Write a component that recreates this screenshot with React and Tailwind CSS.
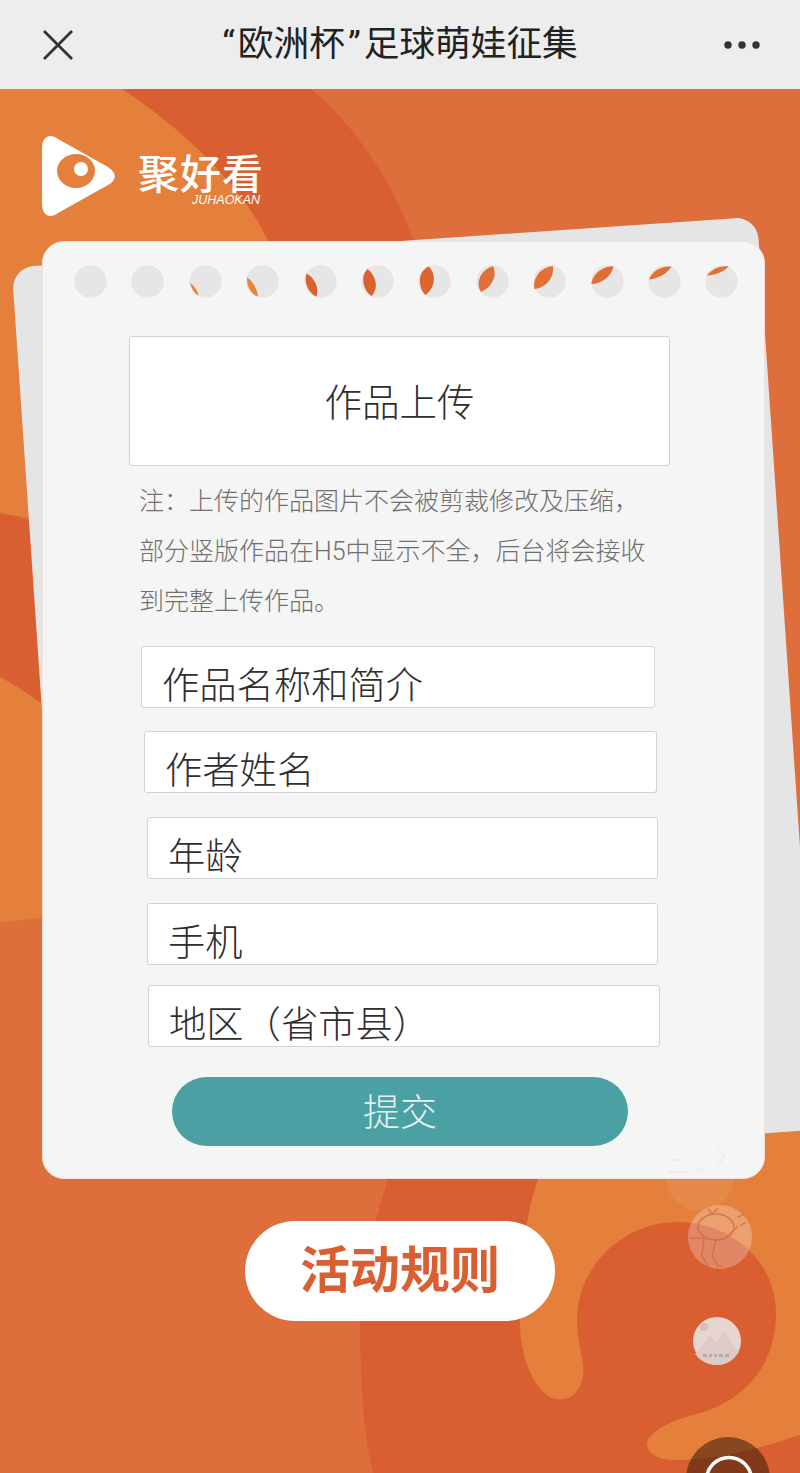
const leaves = [
  null,
  null,
  { d: "M.5 17 C4 20 8 25 9 30 C5 28 2 23 .5 17Z", c: "#e4803c" },
  { d: "M.5 12 C6 15 10.5 23 11.5 31 C5 29 0 21 .5 12Z", c: "#e8843c" },
  { d: "M2 8 C9.5 12 15 22 12 31 C5 28 -1 18 2 8Z", c: "#d9602f" },
  { d: "M6 3.5 C14 10 18 22 10 30.5 C3 26 -2.5 12 6 3.5Z", c: "#d9602f" },
  { d: "M10 1 C18 8 17 22 7 29.5 C1 24 -3 8 10 1Z", c: "#dd6330" },
  { d: "M16.5 .5 C21 10 16 21 4.5 26.5 C-1 18 3 5 16.5 .5Z", c: "#e36f38" },
  { d: "M19.5 .5 C21 12 13 22 .8 23.5 C-1 12 7 2 19.5 .5Z", c: "#e36f38" },
  { d: "M22 .8 C20 10 12 18 0 18.5 C.5 9 11 .5 22 .8Z", c: "#e06c36" },
  { d: "M23 1 C19 8 10 13 .5 14 C3 6 13 0 23 1Z", c: "#e36f38" },
  { d: "M23 1 C18 7 9 9.5 1.5 10 C6 4 14 0 23 1Z", c: "#e36f38" },
]

const fields = [
  { label: "作品名称和简介", cls: "mt-[19px] ml-[98px] w-[514px]" },
  { label: "作者姓名", cls: "mt-[23px] ml-[101px] w-[513px]" },
  { label: "年龄", cls: "mt-[24px] ml-[104px] w-[511px]" },
  { label: "手机", cls: "mt-[24px] ml-[104px] w-[511px]" },
  { label: "地区\uFF08省市县\uFF09", cls: "mt-[20px] ml-[105px] w-[512px]" },
]

const note = "注\uFF1A上传的作品图片不会被剪裁修改及压缩\uFF0C部分竖版作品在H5中显示不全\uFF0C后台将会接收到完整上传作品。"

function Hole({ leaf }) {
  return (
    <svg width="33" height="33" viewBox="-0.5 -0.5 33 33" className="shrink-0">
      <circle cx="16" cy="16" r="15.8" fill="#e6e6e6" stroke="#f0e2db" strokeWidth="1" />
      {leaf && <path d={leaf.d} fill={leaf.c} />}
    </svg>
  )
}

function Background() {
  return (
    <svg className="absolute inset-0" width="800" height="1384" viewBox="0 89 800 1384">
      <path d="M122 89 H311 C355 125 400 190 420 260 L420 320 L270 320 Z" fill="#d95f32" />
      <path d="M0 89 H122 C185 130 245 190 268 241 L290 330 L100 530 L0 513 Z" fill="#e4803c" />
      <path d="M0 513 C10 515 20 517 30 521 L100 540 L100 745 L41 703 C25 692 15 685 0 677 Z" fill="#d95f32" />
      <path d="M0 677 C15 685 25 692 41 703 L100 745 L100 915 L42 918 Q20 920 0 922 Z" fill="#e4803c" />
      <path d="M397 1150 C385 1190 360 1260 360 1322 C360 1390 365 1440 373 1473 H800 V1100 H397 Z" fill="#d95f32" />
      <path
        d="M560 1100 H800 V1435 C760 1448 720 1460 675 1460 C650 1460 642 1445 650 1437 C660 1425 680 1418 700 1413 C745 1400 776 1365 776 1313 C776 1260 730 1222 677 1222 C625 1222 577 1265 577 1320 C577 1345 585 1360 583 1375 C581 1395 565 1404 550 1397 C530 1385 520 1350 520 1322 C520 1265 524 1220 538 1179 Z"
        fill="#e4803c"
      />
    </svg>
  )
}

// stickers floating over the bottom right corner
function Stickers() {
  return (
    <svg className="absolute inset-0 pointer-events-none" width="800" height="1384" viewBox="0 89 800 1384">
      <circle cx="700" cy="1177" r="34" fill="#fff" opacity="0.07" />
      <g fill="none" stroke="#dcdcdc" strokeWidth="2" opacity="0.25">
        <path d="M716 1146 L724 1156 L718 1166 M668 1160 H684 M668 1172 H690 M694 1166 L706 1172" />
      </g>

      <circle cx="720" cy="1237" r="32" fill="#fff" opacity="0.25" />
      <g fill="none" stroke="#c9683f" strokeWidth="1.5" opacity="0.7">
        <ellipse cx="716" cy="1227" rx="18" ry="13" />
        <path d="M712 1214 L708 1208 M712 1214 L718 1208 M690 1238 H704 L702 1256 L708 1266 M716 1240 L712 1256 L718 1266 H722 M728 1236 L738 1226" />
        <path d="M738 1217 L744 1214 M740 1226 L746 1222" />
      </g>

      <circle cx="717" cy="1341" r="24" fill="#e7d5d2" />
      <circle cx="704" cy="1327" r="4" fill="#d6c0bc" />
      <path d="M695 1354 L710 1336 L717 1342 L724 1331 L739 1352 Q730 1365 717 1365 Q703 1365 695 1354Z" fill="#dccbc9" />
      <g fill="#a89a9c" opacity="0.7">
        <rect x="703" y="1354" width="4" height="3" />
        <rect x="709" y="1354" width="3" height="3" />
        <rect x="714" y="1354" width="3" height="3" />
        <rect x="719" y="1354" width="4" height="3" />
        <rect x="725" y="1354" width="4" height="3" />
      </g>

      <circle cx="728" cy="1479" r="42" fill="#3b1a08" opacity="0.55" />
      <circle cx="729" cy="1480" r="22.5" fill="none" stroke="#fff" strokeWidth="3.5" />
    </svg>
  )
}

export default function App() {
  return (
    <div className="w-[800px] h-[1473px] overflow-hidden font-['Roboto','Noto_Sans_CJK_SC',sans-serif] text-[#333]">
      <header className="h-[89px] bg-[#ededed] flex items-center justify-between pl-[42px] pr-[39px]">
        <svg width="32" height="32" viewBox="0 0 32 32" fill="none" stroke="#333" strokeWidth="2.8">
          <path d="M2 2 L30 30 M30 2 L2 30" />
        </svg>
        <h1 className="text-[35.7px] font-normal text-[#222] leading-none whitespace-nowrap">
          <span className="mx-[3px]">“</span>欧洲杯<span className="mx-[3px]">”</span>足球萌娃征集
        </h1>
        <svg width="38" height="8" viewBox="0 0 38 8" fill="#333">
          <circle cx="5" cy="4" r="3.7" />
          <circle cx="19" cy="4" r="3.7" />
          <circle cx="33" cy="4" r="3.7" />
        </svg>
      </header>

      <main className="relative h-[1384px] bg-[#de6e3b] overflow-hidden">
        <Background />

        <div className="relative pl-[41px] pt-[46px] h-[152px] flex items-start gap-[21px]">
          <svg width="76" height="82" viewBox="41 134 76 82" className="shrink-0">
            <path d="M42 148 C42 135 50 132 58 138 L108 166 C117 172 117 179 108 184 L58 212 C50 218 42 215 42 202 Z" fill="#fff" />
            <ellipse cx="76" cy="170" rx="19" ry="17" fill="#e4803c" />
            <circle cx="81" cy="168" r="7" fill="#fff" />
          </svg>
          <div className="relative mt-[20px] text-white">
            <div className="text-[41px] leading-[40px] font-medium tracking-[1px] whitespace-nowrap">聚好看</div>
            <div className="absolute left-[54px] top-[40px] text-[12.5px] leading-[10px] italic whitespace-nowrap font-['Liberation_Sans',sans-serif]">JUHAOKAN</div>
          </div>
        </div>

        <div className="relative ml-[42px] w-[723px] h-[938px]">
          <div className="absolute top-0 left-0 w-[747px] h-[915px] bg-[#e5e5e5] rounded-[22px] -rotate-[3.9deg]" />

          <div className="relative h-full bg-[#f5f5f5] border border-[#f0e2db] rounded-[22px]">
            <div className="flex gap-[24.4px] pl-[31px] pt-[23px]">
              {leaves.map((leaf, i) => (
                <Hole key={i} leaf={leaf} />
              ))}
            </div>

            <div className="mt-[38px] ml-[86px] w-[541px] h-[130px] bg-white border border-[#ccd0d8] rounded-[3px] pt-[4px] flex items-center justify-center text-[37.5px] font-light text-[#2e2e2e]">
              作品上传
            </div>

            <p className="mt-[11px] ml-[96px] w-[510px] text-[25px] leading-[50px] text-[#6f6f6f] font-light">
              {note}
            </p>

            {fields.map((f) => (
              <div
                key={f.label}
                className={`${f.cls} h-[62px] bg-white border border-[#d2d3da] rounded-[3px] pl-[20px] pt-[21px] text-[37.3px] leading-[37px] font-light text-[#2e2e2e] whitespace-nowrap`}
              >
                {f.label}
              </div>
            ))}

            <div className="mt-[30px] ml-[129px] w-[456px] h-[69px] bg-[#4ba0a3] rounded-full pt-[4px] flex items-center justify-center text-[37px] font-light text-[#e6f2f2]">
              提交
            </div>
          </div>
        </div>

        <div className="relative mt-[42px] ml-[245px] w-[310px] h-[100px] bg-white rounded-full flex items-center justify-center text-[50px] font-bold text-[#d95f32]">
          活动规则
        </div>

        <Stickers />
      </main>
    </div>
  )
}
